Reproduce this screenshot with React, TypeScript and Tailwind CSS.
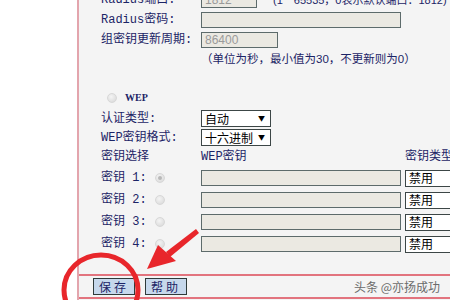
import React from "react";

const label = "text-[12px] leading-none text-[#1c2466] whitespace-nowrap";
const font = { fontFamily: '"Liberation Mono", "Noto Sans CJK SC", monospace' };
const noteFont = { fontFamily: '"Liberation Sans", "Noto Sans CJK SC", sans-serif' };

function Field({ w, value }: { w: string; value?: string }) {
  return (
    <div
      className={`${w} h-[16px] border border-[#5d6b6b] bg-[#ebe9e2] text-[12px] leading-[14px] pl-[3px] text-[#9a9a9a]`}
      style={{ fontFamily: '"Liberation Sans", sans-serif' }}
    >
      {value}
    </div>
  );
}

function Select({ value, w }: { value: string; w: string }) {
  return (
    <div
      className={`${w} h-[17px] shrink-0 border border-[#3c4646] bg-white flex items-center justify-between pl-[3px] pr-[5px] text-[12px] text-black`}
      style={{ fontFamily: '"Noto Sans CJK SC", sans-serif' }}
    >
      <span className="leading-none">{value}</span>
      <span className="text-[7px] leading-none">▼</span>
    </div>
  );
}

function Radio({ checked }: { checked?: boolean }) {
  return (
    <div className="w-[10px] h-[10px] rounded-full bg-[radial-gradient(circle_at_40%_35%,#f4f4f4,#d6d6d6)] border border-[#d8d8d8] flex items-center justify-center">
      {checked && <div className="w-[4px] h-[4px] rounded-full bg-[#b8b8b8]" />}
    </div>
  );
}

function Row({ name, children, h = "h-[20px]" }: { name: string; children?: React.ReactNode; h?: string }) {
  return (
    <div className={`flex items-center ${h}`}>
      <div className={`w-[100px] shrink-0 ${label}`} style={font}>
        {name}
      </div>
      {children}
    </div>
  );
}

export default function App() {
  return (
    <div className="relative w-[450px] h-[300px] overflow-hidden flex bg-white">
      <div className="w-[77px] shrink-0 bg-white" />
      <div className="w-[2px] shrink-0 bg-[#e3a5ad]" />
      <div className="flex-1 min-w-0 bg-[#f4f4f4] flex flex-col">
        <div className="pl-[22px] -mt-[10px] flex flex-col">
          <Row name="Radius端口:">
            <Field w="w-[56px] shrink-0" value="1812" />
            <span className="ml-[16px] text-[11px] leading-none text-[#1c2466] whitespace-nowrap" style={noteFont}>
              (1－65535，0表示默认端口：1812)
            </span>
          </Row>
          <Row name="Radius密码:">
            <Field w="w-[200px]" />
          </Row>
          <Row name="组密钥更新周期:">
            <Field w="w-[77px]" value="86400" />
          </Row>
          <div className="h-[20px] flex items-center pl-[100px]">
            <span className="text-[11.5px] leading-none text-[#1c2466] whitespace-nowrap" style={noteFont}>
              （单位为秒，最小值为30，不更新则为0）
            </span>
          </div>
          <div className="h-[17px]" />
          <div className="h-[22px] flex items-center pl-[6px] gap-[8px]">
            <Radio />
            <span className="text-[10px] font-bold text-[#1c2466] leading-none" style={{ fontFamily: '"Liberation Serif", serif' }}>
              WEP
            </span>
          </div>
          <Row name="认证类型:" h="h-[19px]">
            <Select value="自动" w="w-[70px]" />
          </Row>
          <Row name="WEP密钥格式:" h="h-[19px]">
            <Select value="十六进制" w="w-[70px]" />
          </Row>
          <div className="flex items-center h-[20px]">
            <div className={`w-[100px] shrink-0 ${label}`} style={font}>
              密钥选择
            </div>
            <div className={`w-[204px] shrink-0 ${label}`} style={font}>
              WEP密钥
            </div>
            <div className={label} style={font}>
              密钥类型
            </div>
          </div>
          {[1, 2, 3, 4].map((n) => (
            <div key={n} className="flex items-center h-[22px]">
              <div className={`w-[54px] shrink-0 ${label}`} style={font}>
                密钥 {n}:
              </div>
              <div className="w-[46px] shrink-0">
                <Radio checked={n === 1} />
              </div>
              <Field w="w-[200px] shrink-0" />
              <div className="ml-[4px]">
                <Select value="禁用" w="w-[60px]" />
              </div>
            </div>
          ))}
        </div>
        <div className="mt-[19px] h-[2px] shrink-0 bg-[#e2747e]" />
        <div className="h-[21px] shrink-0 flex items-center pl-[14px] gap-[10px]">
          {["保存", "帮助"].map((t) => (
            <div
              key={t}
              className="h-[17px] w-[42px] border border-[#2e3a3a] bg-[#c6d8ec] flex items-center justify-center text-[12px] text-[#1c2466] tracking-[3px] leading-none"
              style={{ fontFamily: '"Noto Sans CJK SC", sans-serif' }}
            >
              {t}
            </div>
          ))}
          <span
            className="ml-auto mr-[10px] text-[12px] text-[#6b6b6b] leading-none"
            style={{ fontFamily: '"Noto Sans CJK SC", sans-serif' }}
          >
            头条 @亦扬成功
          </span>
        </div>
        <div className="h-[2px] shrink-0 bg-[#e2747e]" />
      </div>
      <svg className="absolute inset-0 pointer-events-none" width="450" height="300" viewBox="0 0 450 300">
        <ellipse cx="101" cy="290" rx="37" ry="35" fill="none" stroke="#e8262b" strokeWidth="5" />
        <path d="M196 229 L166 252 L170 257 L199 233 Z" fill="#e8262b" />
        <path d="M147 269 L158 245 L176 261 Z" fill="#e8262b" />
      </svg>
    </div>
  );
}
